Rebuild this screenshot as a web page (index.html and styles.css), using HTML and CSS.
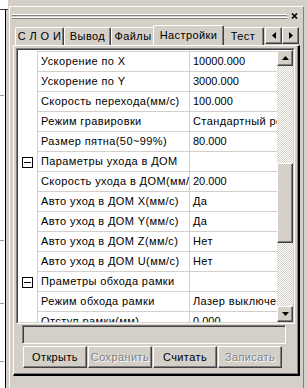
FILE: index.html
```html
<!DOCTYPE html>
<html lang="ru">
<head>
    <meta charset="UTF-8">
    <meta name="viewport" content="width=device-width, initial-scale=1.0">
    <title>Настройки</title>
    <link rel="stylesheet" href="styles.css">
</head>
<body>
    <!-- Edge of the tree view behind the panel -->
    <div class="side">
        <div class="side-top"></div>
        <div class="side-tree"></div>
    </div>

    <!-- Docked tool panel -->
    <div class="panel">
        <div class="panel-head">
            <div class="grip"></div>
            <svg class="close" width="7" height="6" viewBox="0 0 7 6">
                <path d="M1 0.5 L6 5.5 M6 0.5 L1 5.5" stroke="#000" stroke-width="1.6" fill="none"/>
            </svg>
        </div>

        <!-- Tab strip -->
        <div class="tabs">
            <div class="tab-list">
                <div class="tab tab-layers">С Л О И</div>
                <div class="tab tab-output">Вывод</div>
                <div class="tab tab-files">Файлы</div>
                <div class="tab tab-settings active">Настройки</div>
                <div class="tab tab-test">Тест</div>
            </div>
            <div class="tab-scroll">
                <div class="btn3d arrow-btn">
                    <svg width="4" height="7" viewBox="0 0 4 7"><path d="M4 0 L0 3.5 L4 7 Z" fill="#000"/></svg>
                </div>
                <div class="btn3d arrow-btn">
                    <svg width="4" height="7" viewBox="0 0 4 7"><path d="M0 0 L4 3.5 L0 7 Z" fill="#000"/></svg>
                </div>
            </div>
        </div>

        <!-- Settings page -->
        <div class="sheet">
            <div class="grid">
                <div class="grid-in">
                    <div class="rows">
                        <div class="row"><div class="gutter"></div><div class="name">Ускорение по X</div><div class="value num">10000.000</div></div>
                        <div class="row"><div class="gutter"></div><div class="name">Ускорение по Y</div><div class="value num">3000.000</div></div>
                        <div class="row"><div class="gutter"></div><div class="name">Скорость перехода(мм/с)</div><div class="value num">100.000</div></div>
                        <div class="row"><div class="gutter"></div><div class="name">Режим гравировки</div><div class="value">Стандартный режим</div></div>
                        <div class="row"><div class="gutter"></div><div class="name">Размер пятна(50~99%)</div><div class="value num">80.000</div></div>
                        <div class="row"><div class="gutter"><span class="fold"></span></div><div class="name">Параметры ухода в ДОМ</div><div class="value"></div></div>
                        <div class="row"><div class="gutter"></div><div class="name">Скорость ухода в ДОМ(мм/с)</div><div class="value num">20.000</div></div>
                        <div class="row"><div class="gutter"></div><div class="name">Авто уход в ДОМ X(мм/с)</div><div class="value">Да</div></div>
                        <div class="row"><div class="gutter"></div><div class="name">Авто уход в ДОМ Y(мм/с)</div><div class="value">Да</div></div>
                        <div class="row"><div class="gutter"></div><div class="name">Авто уход в ДОМ Z(мм/с)</div><div class="value">Нет</div></div>
                        <div class="row"><div class="gutter"></div><div class="name">Авто уход в ДОМ U(мм/с)</div><div class="value">Нет</div></div>
                        <div class="row"><div class="gutter"><span class="fold"></span></div><div class="name">Праметры обхода рамки</div><div class="value"></div></div>
                        <div class="row"><div class="gutter"></div><div class="name">Режим обхода рамки</div><div class="value">Лазер выключен</div></div>
                        <div class="row"><div class="gutter"></div><div class="name">Отступ рамки(мм)</div><div class="value num">0.000</div></div>
                    </div>

                    <!-- Vertical scroll bar -->
                    <div class="vscroll">
                        <div class="btn3d sb-btn">
                            <svg width="7" height="4" viewBox="0 0 7 4"><path d="M0 4 L3.5 0 L7 4 Z" fill="#000"/></svg>
                        </div>
                        <div class="sb-track sb-top"></div>
                        <div class="btn3d sb-thumb"></div>
                        <div class="sb-track sb-rest"></div>
                        <div class="btn3d sb-btn">
                            <svg width="7" height="4" viewBox="0 0 7 4"><path d="M0 0 L3.5 4 L7 0 Z" fill="#000"/></svg>
                        </div>
                    </div>
                </div>
            </div>

            <div class="status"></div>

            <div class="actions">
                <button class="btn3d">Открыть</button>
                <button class="btn3d" disabled>Сохранить</button>
                <button class="btn3d">Считать</button>
                <button class="btn3d" disabled>Записать</button>
            </div>
        </div>
    </div>
</body>
</html>
```

FILE: styles.css
```css
/* Page layout */
body {
    margin: 0;
    width: 307px;
    height: 388px;
    overflow: hidden;
    display: flex;
    background-color: #d4d0c8;
    font-family: "Liberation Sans", Arial, sans-serif;
    font-size: 11px;
    letter-spacing: 0.4px; /* the original UI font runs a little wider */
    color: #000;
}

/* Strip of the tree view on the left */
.side {
    width: 9px;
    flex: none;
    display: flex;
    flex-direction: column;
}

.side-top {
    width: 8px;
    height: 9px;
    background-color: #fff;
    border-bottom: 1px solid #404040;
}

.side-tree {
    flex: 1;
    width: 5px;
    background-color: #fff;
    border-right: 1px solid #000;
    /* dotted branch lines of the tree */
    background-image:
        linear-gradient(#a0a0a0, #a0a0a0),
        linear-gradient(#a0a0a0, #a0a0a0),
        linear-gradient(#a0a0a0, #a0a0a0),
        linear-gradient(#a0a0a0, #a0a0a0);
    background-size: 4px 1px;
    background-repeat: no-repeat;
    background-position: 0 85px, 0 230px, 0 293px, 0 351px;
}

/* Docked panel */
.panel {
    flex: 1;
    margin: 6px 3px 0 0;
    display: flex;
    flex-direction: column;
    border-top: 1px solid #fff;
    border-left: 1px solid #fff;
    border-right: 1px solid #808080;
}

/* Title row with the grip and close button */
.panel-head {
    height: 18px;
    display: flex;
    align-items: center;
    padding: 0 5px 0 2px;
}

.grip {
    flex: 1;
    height: 5px;
    background: linear-gradient(#fff 0 1px, #808080 1px 2px, transparent 2px 3px, #fff 3px 4px, #808080 4px 5px);
}

.close {
    margin-left: 4px;
    display: block;
}

/* Tab strip */
.tabs {
    height: 20px;
    margin: 0 3px;
    display: flex;
}

.tab-list {
    flex: 1;
    display: flex;
    align-items: flex-end;
    padding-left: 2px;
    overflow: hidden;
}

.tab {
    flex: none;
    box-sizing: border-box;
    height: 18px;
    line-height: 16px;
    text-align: center;
    white-space: nowrap;
    border-top: 1px solid #fff;
    border-left: 1px solid #fff;
    border-right: 1px solid #404040;
    border-radius: 2px 2px 0 0;
    box-shadow: inset -1px 0 #808080;
}

.tab-layers { width: 49px; }
.tab-output { width: 47px; }
.tab-files { width: 44px; }
.tab-settings { width: 67px; }
.tab-test { width: 42px; }

/* Selected tab is taller and covers the sheet edge */
.tab.active {
    width: 71px;
    height: 21px;
    line-height: 18px;
    margin: 0 -2px -1px;
    position: relative;
    z-index: 1;
    background-color: #d4d0c8;
}

.tab-scroll {
    display: flex;
    margin-right: 1px;
}

/* Raised 3D look shared by buttons */
.btn3d {
    box-sizing: border-box;
    background-color: #d4d0c8;
    border: 1px solid;
    border-color: #fff #404040 #404040 #fff;
    box-shadow: inset -1px -1px #808080;
}

.arrow-btn {
    width: 17px;
    height: 17px;
    margin-top: 2px;
    display: flex;
    align-items: center;
    justify-content: center;
}

/* Tab page */
.sheet {
    height: 331px;
    box-sizing: border-box;
    margin: 0 3px;
    display: flex;
    flex-direction: column;
    border-top: 1px solid #fff;
    border-left: 1px solid #fff;
    border-right: 2px solid #000;
    border-bottom: 2px solid #000;
    box-shadow: inset -1px -1px #808080;
}

/* Property grid with a sunken border */
.grid {
    width: 279px;
    height: 276px;
    box-sizing: border-box;
    margin: 2px 0 0 2px;
    border: 1px solid;
    border-color: #808080 #fff #fff #808080;
}

.grid-in {
    height: 100%;
    box-sizing: border-box;
    display: flex;
    border: 1px solid;
    border-color: #404040 #d4d0c8 #d4d0c8 #404040;
    background-color: #fff;
}

.rows {
    flex: 1;
    overflow: hidden;
    padding-top: 1px;
}

.row {
    display: flex;
    height: 20px;
}

.row:first-child {
    height: 21px;
}

.row:first-child .name,
.row:first-child .value {
    border-top: 1px solid #d4d0c8;
}

.gutter {
    width: 15px;
    flex: none;
    padding-left: 4px;
    border-right: 1px solid #d4d0c8;
    display: flex;
    align-items: center;
}

/* Collapse box of a group row */
.fold {
    width: 9px;
    height: 9px;
    border: 1px solid #000;
    background: linear-gradient(#000, #000) center / 7px 1px no-repeat;
}

.name,
.value {
    line-height: 19px;
    padding-left: 3px;
    white-space: nowrap;
    overflow: hidden;
    border-bottom: 1px solid #d4d0c8;
}

.name {
    width: 148px;
    flex: none;
    border-right: 1px solid #d4d0c8;
}

.value {
    width: 84px;
    flex: none;
}

/* Numbers already have the right width */
.value.num {
    letter-spacing: 0;
}

/* Scroll bar */
.vscroll {
    width: 16px;
    flex: none;
    display: flex;
    flex-direction: column;
}

.sb-btn {
    height: 16px;
    display: flex;
    align-items: center;
    justify-content: center;
}

.sb-track {
    background: repeating-conic-gradient(#fff 0 25%, #d4d0c8 0 50%) 0 0 / 2px 2px;
}

.sb-top { height: 97px; }
.sb-thumb { height: 80px; }
.sb-rest { flex: 1; }

/* Empty status box under the grid */
.status {
    width: 264px;
    height: 19px;
    box-sizing: border-box;
    margin: 1px 0 0 8px;
    border: 1px solid;
    border-color: #808080 #fff #fff #808080;
    box-shadow: inset 1px 1px #404040;
}

/* Button row */
.actions {
    display: flex;
    gap: 1px;
    margin: 2px 0 0 9px;
}

.actions button {
    width: 64px;
    height: 22px;
    padding: 0;
    font: inherit;
    letter-spacing: inherit;
    color: #000;
}

.actions button:disabled {
    color: #808080;
    text-shadow: 1px 1px 0 #fff;
}
```
